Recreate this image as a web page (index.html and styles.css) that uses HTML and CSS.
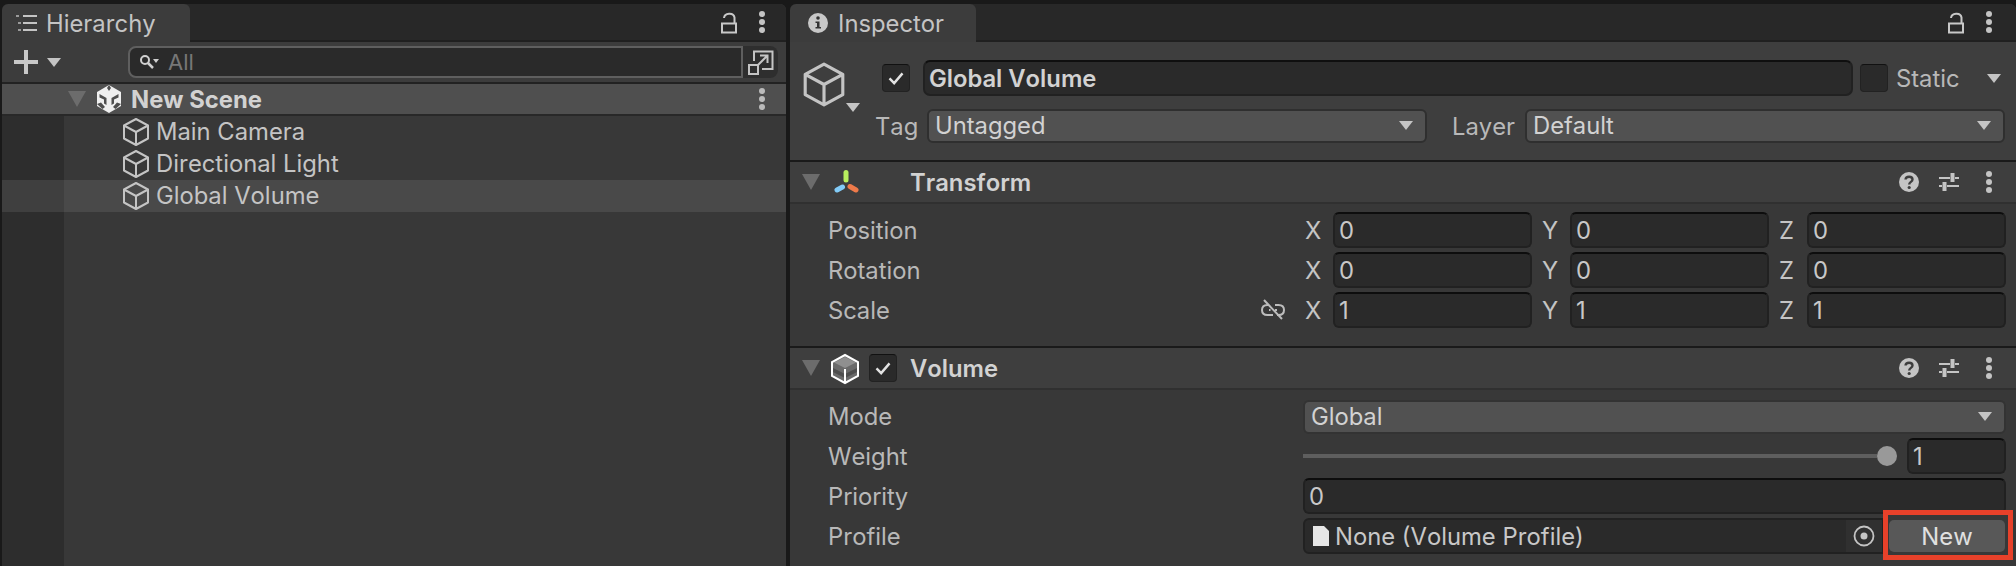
FILE: index.html
```html
<!DOCTYPE html>
<html lang="en">
<head>
<meta charset="utf-8">
<title>Unity Editor</title>
<link rel="stylesheet" href="styles.css">
</head>
<body>
<svg class="defs" width="0" height="0" aria-hidden="true">
  <symbol id="cube" viewBox="0 0 28 30">
    <path d="M14 2 26 8.500V21.500L14 28 2 21.500V8.500ZM2 8.500 14 15 26 8.500M14 15V28" fill="none" stroke="currentColor" stroke-width="2" stroke-linejoin="round"/>
  </symbol>
  <symbol id="dots" viewBox="0 0 8 24">
    <circle cx="4" cy="4" r="3" fill="currentColor"/><circle cx="4" cy="12" r="3" fill="currentColor"/><circle cx="4" cy="20" r="3" fill="currentColor"/>
  </symbol>
  <symbol id="lock" viewBox="0 0 18 22">
    <path d="M2 11.500H16V20.500H2ZM4 6C4.500 1 13.500 0 14.500 5.500V11.500" fill="none" stroke="currentColor" stroke-width="2"/>
  </symbol>
  <symbol id="help" viewBox="0 0 20 20">
    <circle cx="10" cy="10" r="10" fill="currentColor"/>
    <path d="M6.500 7.500C6.800 3.800 13.500 3.800 13.500 7.500 13.500 10 10.200 9.800 10.200 12.500" fill="none" stroke="#3e3e3e" stroke-width="2.400"/>
    <circle cx="10.200" cy="15.500" r="1.600" fill="#3e3e3e"/>
  </symbol>
  <symbol id="sliders" viewBox="0 0 20 20">
    <path d="M0 6H11M16 6H20M0 14H3M8 14H20" stroke="currentColor" stroke-width="2" fill="none"/>
    <path d="M13.500 1V10M5.500 10V19" stroke="currentColor" stroke-width="4" fill="none"/>
  </symbol>
  <symbol id="check" viewBox="0 0 28 28">
    <path d="M7 14.500 12 19.500 21 9" fill="none" stroke="#e2e2e2" stroke-width="2.600"/>
  </symbol>
</svg>

<main class="editor">
  <section class="panel hierarchy">
    <header class="tabbar">
      <div class="tab tab-h">
        <svg class="tab-icon" width="22" height="18" viewBox="0 0 22 18"><path d="M8 2H22M8 9H22M8 16H22" stroke="#c4c4c4" stroke-width="2"/><path d="M1 1h3v2H1zM3 8h3v2H3zM3 15h3v2H3z" fill="#9a9a9a"/></svg>
        <span>Hierarchy</span>
      </div>
      <div class="tab-actions tab-actions-h">
        <svg class="ic-lock"><use href="#lock"/></svg>
        <svg class="ic-dots"><use href="#dots"/></svg>
      </div>
    </header>
    <div class="toolbar">
      <div class="add">
        <svg width="24" height="24" viewBox="0 0 24 24"><path d="M12 0V24M0 12H24" stroke="#c8c8c8" stroke-width="4"/></svg>
        <i class="caret caret-light"></i>
      </div>
      <div class="search">
        <svg width="20" height="16" viewBox="0 0 20 16"><circle cx="6" cy="6" r="4" fill="none" stroke="#d0d0d0" stroke-width="2"/><path d="M9 9 14 14" stroke="#d0d0d0" stroke-width="2.500"/><path d="M14 5H20L17 9Z" fill="#d0d0d0"/></svg>
        <span>All</span>
      </div>
      <div class="search-btn">
        <svg width="26" height="26" viewBox="0 0 26 26"><path d="M6 12V2.500H24.500V20H14" fill="none" stroke="#c4c4c4" stroke-width="2"/><rect x="1" y="16" width="9" height="9" fill="none" stroke="#c4c4c4" stroke-width="2"/><path d="M10 16 19 7M12 6.500H19.500V14" fill="none" stroke="#c4c4c4" stroke-width="2"/></svg>
      </div>
    </div>
    <div class="scene-row">
      <i class="fold fold-scene"></i>
      <svg class="unity" width="26" height="28" viewBox="0 0 26 28"><path d="M13 0 25 7V21L13 28 1 21V7Z" fill="#efefef"/><path d="M13 0 11 3 13 6 15 3ZM3.500 9 10.500 13V20L8 18.500V14.500L3.500 12.500ZM22.500 9 15.500 13V20L18 18.500V14.500L22.500 12.500ZM1 19 5 17.500 9 22 6.500 24ZM25 19 21 17.500 17 22 19.500 24Z" fill="#4f4f4f"/></svg>
      <strong>New Scene</strong>
      <svg class="ic-dots ic-dots-scene"><use href="#dots"/></svg>
    </div>
    <ul class="tree">
      <li class="tree-row"><svg class="ic-cube"><use href="#cube"/></svg><span>Main Camera</span></li>
      <li class="tree-row"><svg class="ic-cube"><use href="#cube"/></svg><span>Directional Light</span></li>
      <li class="tree-row tree-row-on"><svg class="ic-cube"><use href="#cube"/></svg><span>Global Volume</span></li>
    </ul>
  </section>

  <section class="panel inspector">
    <header class="tabbar">
      <div class="tab tab-i">
        <svg class="tab-icon" width="20" height="20" viewBox="0 0 20 20"><circle cx="10" cy="10" r="10" fill="#c8c8c8"/><circle cx="10" cy="5" r="1.800" fill="#333"/><path d="M7.500 8.500H11.500V14H13V15.500H7.500V14H9V10H7.500Z" fill="#333"/></svg>
        <span>Inspector</span>
      </div>
      <div class="tab-actions tab-actions-i">
        <svg class="ic-lock"><use href="#lock"/></svg>
        <svg class="ic-dots"><use href="#dots"/></svg>
      </div>
    </header>

    <div class="object">
      <div class="object-icon">
        <svg class="ic-cube-big"><use href="#cube"/></svg>
        <i class="caret caret-light caret-object"></i>
      </div>
      <div class="object-rows">
        <div class="name-row">
          <div class="checkbox"><svg class="ic-check"><use href="#check"/></svg></div>
          <div class="name-field">Global Volume</div>
          <div class="checkbox"></div>
          <span class="static-label">Static</span>
          <i class="caret caret-light"></i>
        </div>
        <div class="tag-row">
          <span class="tag-label">Tag</span>
          <div class="dropdown dropdown-tag"><span>Untagged</span><i class="caret caret-light"></i></div>
          <span class="layer-label">Layer</span>
          <div class="dropdown dropdown-layer"><span>Default</span><i class="caret caret-light"></i></div>
        </div>
      </div>
    </div>

    <div class="comp-head comp-first">
      <i class="fold"></i>
      <svg class="ic-transform" width="26" height="24" viewBox="0 0 26 24"><path d="M13 2.500V10" stroke="#b8ef5e" stroke-width="5" stroke-linecap="round"/><path d="M4 20 9.500 17" stroke="#82cbf7" stroke-width="5" stroke-linecap="round"/><path d="M17 16.500 23 20" stroke="#ee7a4a" stroke-width="5" stroke-linecap="round"/></svg>
      <strong class="comp-title">Transform</strong>
      <div class="comp-actions">
        <svg class="ic-20"><use href="#help"/></svg>
        <svg class="ic-20"><use href="#sliders"/></svg>
        <svg class="ic-dots"><use href="#dots"/></svg>
      </div>
    </div>
    <div class="comp-body comp-body-t">
      <div class="row">
        <span class="row-label">Position</span>
        <div class="vector">
          <div class="axis"><span>X</span><div class="field">0</div></div>
          <div class="axis"><span>Y</span><div class="field">0</div></div>
          <div class="axis"><span>Z</span><div class="field">0</div></div>
        </div>
      </div>
      <div class="row">
        <span class="row-label">Rotation</span>
        <div class="vector">
          <div class="axis"><span>X</span><div class="field">0</div></div>
          <div class="axis"><span>Y</span><div class="field">0</div></div>
          <div class="axis"><span>Z</span><div class="field">0</div></div>
        </div>
      </div>
      <div class="row">
        <span class="row-label">Scale
          <svg class="ic-link" width="24" height="22" viewBox="0 0 24 22"><path d="M8 6H6.500C3 6 1 8 1 11S3 16 6.500 16H12M14 6H17.500C21 6 23 8 23 11S21 16 17.500 16H16M8 11H9.500M14 11H16" fill="none" stroke="#bdbdbd" stroke-width="2"/><path d="M3 1 21 20" stroke="#bdbdbd" stroke-width="2"/></svg>
        </span>
        <div class="vector">
          <div class="axis"><span>X</span><div class="field">1</div></div>
          <div class="axis"><span>Y</span><div class="field">1</div></div>
          <div class="axis"><span>Z</span><div class="field">1</div></div>
        </div>
      </div>
    </div>

    <div class="comp-head">
      <i class="fold"></i>
      <svg class="ic-volume" width="30" height="32" viewBox="0 0 30 32"><path d="M15 2 28 9V23L15 30 2 23V9Z" fill="#6a6a6a"/><path d="M15 4 26 9.500 15 15 4 9.500Z" fill="#8f8f8f"/><path d="M3 15 15 21 27 15V19L15 25 3 19Z" fill="#4e4e4e"/><path d="M15 2 28 9V23L15 30 2 23V9ZM15 16V30" fill="none" stroke="#fff" stroke-width="2"/></svg>
      <div class="checkbox checkbox-comp"><svg class="ic-check"><use href="#check"/></svg></div>
      <strong class="comp-title comp-title-v">Volume</strong>
      <div class="comp-actions">
        <svg class="ic-20"><use href="#help"/></svg>
        <svg class="ic-20"><use href="#sliders"/></svg>
        <svg class="ic-dots"><use href="#dots"/></svg>
      </div>
    </div>
    <div class="comp-body">
      <div class="row">
        <span class="row-label">Mode</span>
        <div class="dropdown dropdown-mode"><span>Global</span><i class="caret caret-light"></i></div>
      </div>
      <div class="row">
        <span class="row-label">Weight</span>
        <div class="slider">
          <div class="track"><i class="thumb"></i></div>
          <div class="field field-weight">1</div>
        </div>
      </div>
      <div class="row">
        <span class="row-label">Priority</span>
        <div class="field field-wide">0</div>
      </div>
      <div class="row">
        <span class="row-label">Profile</span>
        <div class="profile">
          <div class="object-field">
            <svg width="16" height="20" viewBox="0 0 16 20"><path d="M0 0H11L16 5V20H0Z" fill="#e6e6e6"/></svg>
            <span>None (Volume Profile)</span>
            <div class="picker"><svg width="22" height="22" viewBox="0 0 22 22"><circle cx="11" cy="11" r="9.500" fill="none" stroke="#c4c4c4" stroke-width="1.800"/><circle cx="11" cy="11" r="3.500" fill="#c4c4c4"/></svg></div>
          </div>
          <button class="new-btn" type="button">New</button>
          <div class="highlight"></div>
        </div>
      </div>
    </div>
  </section>
</main>
</body>
</html>
```

FILE: styles.css
```css
* { box-sizing: border-box; }

html, body {
  margin: 0;
  height: 100%;
  overflow: hidden;
}

body {
  background: #191919;
  font-family: Inter, "Liberation Sans", sans-serif;
  font-size: 23.800px;
  font-kerning: none;
  color: #c4c4c4;
}

.defs { position: absolute; }

.editor {
  display: flex;
  gap: 4px;
  height: 566px;
  padding-top: 4px;
  padding-left: 2px;
}

.panel {
  background: #383838;
  border-radius: 6px 6px 0 0;
  overflow: hidden;
}

.hierarchy { width: 784px; }
.inspector { width: 1226px; }

.tabbar {
  display: flex;
  justify-content: space-between;
  height: 38px;
  background: #282828;
  border-bottom: 2px solid #202020;
}

.tab {
  display: flex;
  align-items: center;
  height: 38px;
  background: #3c3c3c;
  border-radius: 6px 6px 0 0;
  color: #c4c4c4;
}

.tab-h { width: 188px; padding-left: 13px; gap: 9px; }
.tab-i { width: 186px; padding-left: 18px; gap: 10px; }

.tab-actions {
  display: flex;
  align-items: center;
  height: 36px;
  color: #c8c8c8;
  gap: 20px;
}

.tab-actions-h { padding-right: 20px; }
.tab-actions-i { padding-right: 23px; }

.ic-lock { width: 18px; height: 22px; margin-top: 2px; }
.ic-dots { width: 8px; height: 24px; color: #c4c4c4; }

.toolbar {
  display: flex;
  align-items: center;
  height: 42px;
  background: #3c3c3c;
  border-bottom: 2px solid #222;
  padding-right: 6px;
}

.add {
  display: flex;
  align-items: center;
  gap: 9px;
  width: 126px;
  padding-left: 12px;
}

.caret {
  display: inline-block;
  width: 0;
  height: 0;
  border-left: 7px solid transparent;
  border-right: 7px solid transparent;
  border-top: 9px solid #c4c4c4;
}

.search {
  display: flex;
  align-items: center;
  gap: 9px;
  width: 615px;
  height: 32px;
  padding-left: 9px;
  background: #2a2a2a;
  border: 2px solid #5f5f5f;
  border-radius: 8px 0 0 8px;
  color: #777;
  font-size: 22px;
}

.search-btn {
  display: flex;
  align-items: center;
  justify-content: center;
  width: 35px;
  height: 32px;
  background: #2e2e2e;
  border-radius: 0 8px 8px 0;
}

.scene-row {
  display: flex;
  align-items: center;
  height: 32px;
  background: #4f4f4f;
  border-bottom: 2px solid #282828;
  padding-left: 66px;
  padding-right: 20px;
  color: #d2d2d2;
}

.scene-row strong { font-weight: 700; margin-left: 9px; }

.fold {
  flex: none;
  width: 0;
  height: 0;
  border-left: 9px solid transparent;
  border-right: 9px solid transparent;
  border-top: 16px solid #6c6c6c;
}

.unity { margin-left: 10px; }
.ic-dots-scene { margin-left: auto; color: #bbb; }

.tree {
  list-style: none;
  margin: 0;
  padding: 0;
  height: 450px;
  background: linear-gradient(90deg, #2d2d2d 62px, #383838 62px);
}

.tree-row {
  display: flex;
  align-items: center;
  gap: 6px;
  height: 32px;
  padding-left: 120px;
  color: #c4c4c4;
}

.tree-row span { margin-top: -2px; }
.tree-row-on { background: rgba(255, 255, 255, 0.085); }

.ic-cube { width: 28px; height: 30px; color: #c4c4c4; }

.object {
  display: flex;
  height: 120px;
  background: #3e3e3e;
  border-bottom: 2px solid #1a1a1a;
}

.object-icon {
  flex: none;
  display: flex;
  width: 85px;
  padding: 19px 0 0 12px;
}

.ic-cube-big { width: 44px; height: 47px; color: #c4c4c4; flex: none; }
.caret-object { margin-top: 42px; flex: none; }

.object-rows {
  flex: 1;
  padding: 18px 11px 0 0;
}

.name-row {
  display: flex;
  align-items: center;
  height: 36px;
  padding-left: 7px;
  padding-right: 4px;
}

.checkbox {
  flex: none;
  width: 28px;
  height: 28px;
  background: #2a2a2a;
  border: 1px solid #222;
  border-top-color: #111;
  border-radius: 4px;
}

.ic-check { display: block; width: 26px; height: 26px; }

.name-field {
  flex: none;
  display: flex;
  align-items: center;
  width: 930px;
  height: 36px;
  margin: 0 7px 0 13px;
  padding-left: 4px;
  background: #2a2a2a;
  border: 2px solid #212121;
  border-top-color: #0f0f0f;
  border-radius: 7px;
  font-weight: 600;
  color: #d2d2d2;
}

.static-label { margin-left: 8px; margin-right: auto; color: #b8b8b8; }

.tag-row {
  display: flex;
  align-items: center;
  height: 34px;
  margin-top: 13px;
}

.tag-label { flex: none; width: 52px; color: #b8b8b8; }
.layer-label { flex: none; width: 73px; margin-left: 25px; color: #b8b8b8; }

.dropdown {
  display: flex;
  align-items: center;
  justify-content: space-between;
  height: 34px;
  padding: 0 12px 1px 6px;
  background: #515151;
  border: 2px solid #2f2f2f;
  border-radius: 6px;
  color: #d2d2d2;
}

.dropdown-tag { width: 500px; }
.dropdown-layer { width: 480px; }
.dropdown-mode { width: 703px; border-color: #333; align-self: flex-end; padding-bottom: 2px; }

.comp-head {
  display: flex;
  align-items: center;
  height: 42px;
  padding-left: 12px;
  padding-right: 23px;
  background: #3e3e3e;
  border-bottom: 2px solid #303030;
}

.ic-transform { margin-left: 13px; }
.ic-volume { margin-left: 10px; margin-top: 2px; }
.checkbox-comp { margin-left: 9px; }

.comp-title {
  font-weight: 600;
  color: #d2d2d2;
  margin-left: 51px;
}

.comp-title-v { margin-left: 13px; }

.comp-actions {
  display: flex;
  align-items: center;
  gap: 20px;
  margin-left: auto;
  color: #c4c4c4;
}

.comp-actions .ic-dots { margin-left: 6px; }

.ic-20 { width: 20px; height: 20px; }

.comp-body {
  display: flex;
  flex-direction: column;
  gap: 4px;
  padding: 8px 10px 0 38px;
}

.comp-body-t {
  height: 144px;
  border-bottom: 2px solid #1a1a1a;
}

.row {
  display: flex;
  height: 36px;
  align-items: center;
}

.row-label {
  flex: none;
  display: flex;
  align-items: center;
  justify-content: space-between;
  width: 475px;
  padding-right: 18px;
  color: #b8b8b8;
}

.vector {
  display: flex;
  gap: 8px;
  width: 703px;
}

.axis {
  display: flex;
  align-items: center;
  width: 229px;
}

.axis > span { width: 30px; padding-left: 2px; color: #c4c4c4; }

.field {
  display: flex;
  align-items: center;
  height: 36px;
  padding-left: 4px;
  background: #2a2a2a;
  border: 2px solid #212121;
  border-top-color: #0d0d0d;
  border-radius: 6px;
  color: #c8c8c8;
}

.axis .field { width: 199px; }
.field-wide { width: 703px; }

.slider {
  display: flex;
  align-items: center;
  width: 703px;
}

.track {
  position: relative;
  width: 574px;
  height: 4px;
  margin-right: 30px;
  background: #5e5e5e;
}

.thumb {
  position: absolute;
  right: -20px;
  top: -8px;
  width: 20px;
  height: 20px;
  border-radius: 50%;
  background: #999;
}

.field-weight { width: 99px; }

.profile {
  position: relative;
  display: flex;
  align-items: center;
  width: 703px;
}

.object-field {
  display: flex;
  align-items: center;
  gap: 6px;
  width: 581px;
  height: 36px;
  padding-left: 8px;
  background: #2a2a2a;
  border: 2px solid #212121;
  border-radius: 6px 0 0 6px;
  color: #c8c8c8;
}

.picker {
  display: flex;
  align-items: center;
  justify-content: center;
  width: 36px;
  height: 32px;
  margin-left: auto;
  background: #303030;
}

.new-btn {
  width: 116px;
  height: 32px;
  margin-left: 5px;
  border: 0;
  border-radius: 5px;
  background: #585858;
  color: #e0e0e0;
  font: inherit;
  font-kerning: none;
  padding: 0;
}

.highlight {
  position: absolute;
  left: 580px;
  top: -8px;
  width: 130px;
  height: 50px;
  border: 5px solid #e8412a;
}
```
